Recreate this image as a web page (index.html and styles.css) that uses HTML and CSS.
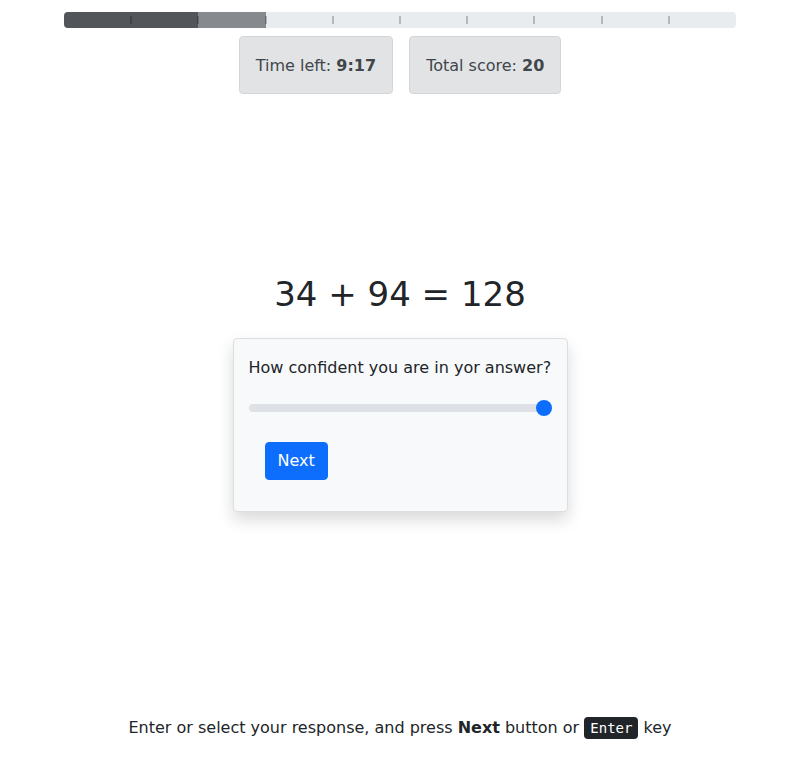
FILE: index.html
```html
<!DOCTYPE html>
<html lang="en">
<head>
<meta charset="utf-8">
<title>Quiz</title>
<link rel="stylesheet" href="styles.css">
</head>
<body>
<div class="page">
  <header class="top">
    <div class="progress">
      <div class="seg seg-done" style="width:20%"></div>
      <div class="seg seg-current" style="width:10%"></div>
      <div class="ticks">
        <span></span><span></span><span></span><span></span><span></span>
        <span></span><span></span><span></span><span></span><span></span>
      </div>
    </div>
    <div class="stats">
      <div class="stat">Time left: <b>9:17</b></div>
      <div class="stat">Total score: <b>20</b></div>
    </div>
  </header>

  <main class="middle">
    <h1 class="question">34 + 94 = 128</h1>
    <div class="card">
      <label class="card-label" for="conf">How confident you are in yor answer?</label>
      <input id="conf" class="range" type="range" min="0" max="100" value="100">
      <div class="actions">
        <button class="btn" type="button">Next</button>
      </div>
    </div>
  </main>

  <footer class="hint">
    Enter or select your response, and press <b>Next</b> button or <kbd>Enter</kbd> key
  </footer>
</div>
</body>
</html>
```

FILE: styles.css
```css
* { box-sizing: border-box; }
html, body { margin: 0; padding: 0; }
body {
  font-family: "DejaVu Sans", sans-serif;
  font-size: 16px;
  line-height: 1.5;
  color: #212529;
  background: #fff;
}
.page {
  height: 768px;
  display: flex;
  flex-direction: column;
  align-items: center;
}
.top {
  width: 672px;
  padding-top: 12px;
  display: flex;
  flex-direction: column;
  align-items: center;
}
.progress {
  position: relative;
  width: 100%;
  height: 16px;
  background: #e9ecef;
  border-radius: 4px;
  overflow: hidden;
  display: flex;
}
.seg { height: 100%; }
.seg-done { background: #52565b; }
.seg-current { background: #86898d; }
.ticks {
  position: absolute;
  inset: 0;
  display: flex;
}
.ticks span {
  flex: 1;
  position: relative;
}
.ticks span::after {
  content: "";
  position: absolute;
  right: -1px;
  top: 4px;
  width: 2px;
  height: 8px;
  background: rgba(0, 0, 0, 0.22);
}
.ticks span:last-child::after { display: none; }
.stats {
  display: flex;
  gap: 16px;
  margin-top: 8px;
}
.stat {
  padding: 17px 16px 15px;
  background: #e2e3e5;
  border: 1px solid #d3d6d8;
  border-radius: 4px;
  color: #41464b;
}
.middle {
  flex: 1;
  display: flex;
  flex-direction: column;
  align-items: center;
  padding-top: 180px;
}
.question {
  margin: 0 0 23px;
  font-size: 34px;
  font-weight: 400;
  line-height: 1.2;
}
.card {
  width: 335px;
  background: #f8f9fa;
  border: 1px solid #dcdee0;
  border-radius: 4px;
  box-shadow: 0 8px 16px rgba(0, 0, 0, 0.15);
  padding: 17px 15px 0;
  display: flex;
  flex-direction: column;
}
.card-label {
  display: block;
}
.range {
  -webkit-appearance: none;
  appearance: none;
  width: 100%;
  height: 24px;
  margin: 16px 0 0;
  padding: 0;
  background: transparent;
}
.range::-webkit-slider-runnable-track {
  height: 8px;
  background: #dee2e6;
  border-radius: 16px;
}
.range::-webkit-slider-thumb {
  -webkit-appearance: none;
  appearance: none;
  width: 16px;
  height: 16px;
  margin-top: -4px;
  border-radius: 50%;
  background: #0d6efd;
  border: 0;
}
.actions {
  padding: 22px 16px 31px;
}
.btn {
  font-family: inherit;
  font-size: 16px;
  line-height: 24px;
  padding: 6px 12px;
  color: #fff;
  background: #0d6efd;
  border: 1px solid #0d6efd;
  border-radius: 4px;
}
.hint {
  padding-bottom: 28px;
  text-align: center;
}
kbd {
  font-family: "DejaVu Sans Mono", monospace;
  font-size: 14px;
  padding: 3px 6px;
  color: #fff;
  background: #212529;
  border-radius: 4px;
}
```
